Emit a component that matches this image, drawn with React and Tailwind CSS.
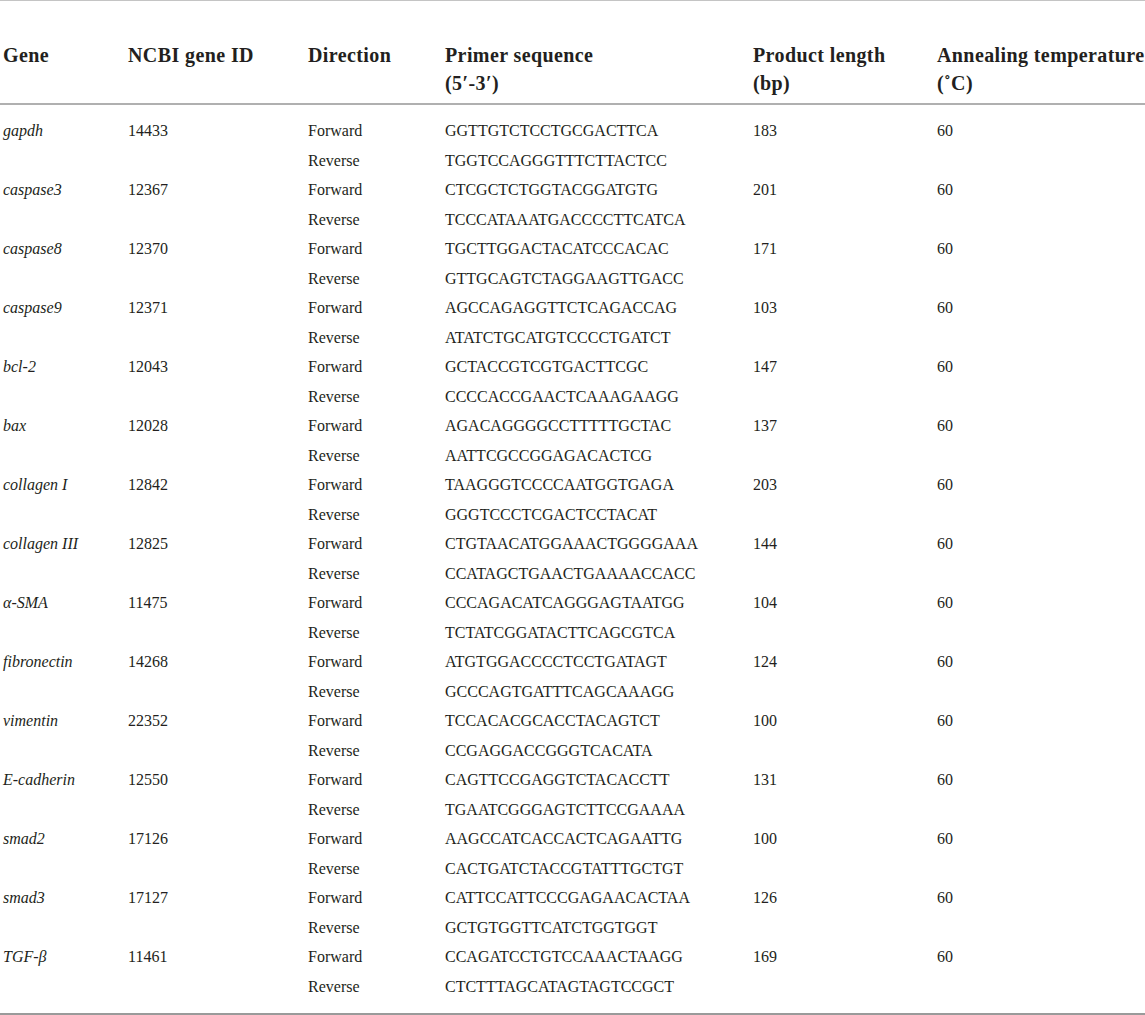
const rows = [
  ['gapdh', '14433', 'GGTTGTCTCCTGCGACTTCA', 'TGGTCCAGGGTTTCTTACTCC', '183'],
  ['caspase3', '12367', 'CTCGCTCTGGTACGGATGTG', 'TCCCATAAATGACCCCTTCATCA', '201'],
  ['caspase8', '12370', 'TGCTTGGACTACATCCCACAC', 'GTTGCAGTCTAGGAAGTTGACC', '171'],
  ['caspase9', '12371', 'AGCCAGAGGTTCTCAGACCAG', 'ATATCTGCATGTCCCCTGATCT', '103'],
  ['bcl-2', '12043', 'GCTACCGTCGTGACTTCGC', 'CCCCACCGAACTCAAAGAAGG', '147'],
  ['bax', '12028', 'AGACAGGGGCCTTTTTGCTAC', 'AATTCGCCGGAGACACTCG', '137'],
  ['collagen I', '12842', 'TAAGGGTCCCCAATGGTGAGA', 'GGGTCCCTCGACTCCTACAT', '203'],
  ['collagen III', '12825', 'CTGTAACATGGAAACTGGGGAAA', 'CCATAGCTGAACTGAAAACCACC', '144'],
  ['α-SMA', '11475', 'CCCAGACATCAGGGAGTAATGG', 'TCTATCGGATACTTCAGCGTCA', '104'],
  ['fibronectin', '14268', 'ATGTGGACCCCTCCTGATAGT', 'GCCCAGTGATTTCAGCAAAGG', '124'],
  ['vimentin', '22352', 'TCCACACGCACCTACAGTCT', 'CCGAGGACCGGGTCACATA', '100'],
  ['E-cadherin', '12550', 'CAGTTCCGAGGTCTACACCTT', 'TGAATCGGGAGTCTTCCGAAAA', '131'],
  ['smad2', '17126', 'AAGCCATCACCACTCAGAATTG', 'CACTGATCTACCGTATTTGCTGT', '100'],
  ['smad3', '17127', 'CATTCCATTCCCGAGAACACTAA', 'GCTGTGGTTCATCTGGTGGT', '126'],
  ['TGF-β', '11461', 'CCAGATCCTGTCCAAACTAAGG', 'CTCTTTAGCATAGTAGTCCGCT', '169'],
];

const cols = 'grid grid-cols-[125px_180px_137px_308px_184px_1fr] pl-[3px]';

export default function App() {
  return (
    <div className="w-[1145px] h-[1015px] bg-white text-[#231f20] font-['Liberation_Serif',serif] overflow-hidden">
      <div className="border-t border-[#c4c4c4]">
        <div className={`${cols} h-[104px] pt-[40px] text-[20px] font-bold leading-[28px] tracking-[0.4px] border-b-2 border-[#b0b0b0]`}>
          <div>Gene</div>
          <div>NCBI gene ID</div>
          <div>Direction</div>
          <div>
            Primer sequence
            <br />
            (5′-3′)
          </div>
          <div>
            Product length
            <br />
            (bp)
          </div>
          <div className="whitespace-nowrap">
            Annealing temperature
            <br />
            (˚C)
          </div>
        </div>
        <div className="pt-[11px] pb-[12px] text-[16px] leading-[29.5px] border-b-2 border-[#9a9a9a]">
          {rows.map(([gene, id, fwd, rev, len]) => (
            <div key={gene}>
              <div className={cols}>
                <div className="italic">{gene}</div>
                <div>{id}</div>
                <div>Forward</div>
                <div>{fwd}</div>
                <div>{len}</div>
                <div>60</div>
              </div>
              <div className={cols}>
                <div />
                <div />
                <div>Reverse</div>
                <div>{rev}</div>
                <div />
                <div />
              </div>
            </div>
          ))}
        </div>
      </div>
    </div>
  );
}
